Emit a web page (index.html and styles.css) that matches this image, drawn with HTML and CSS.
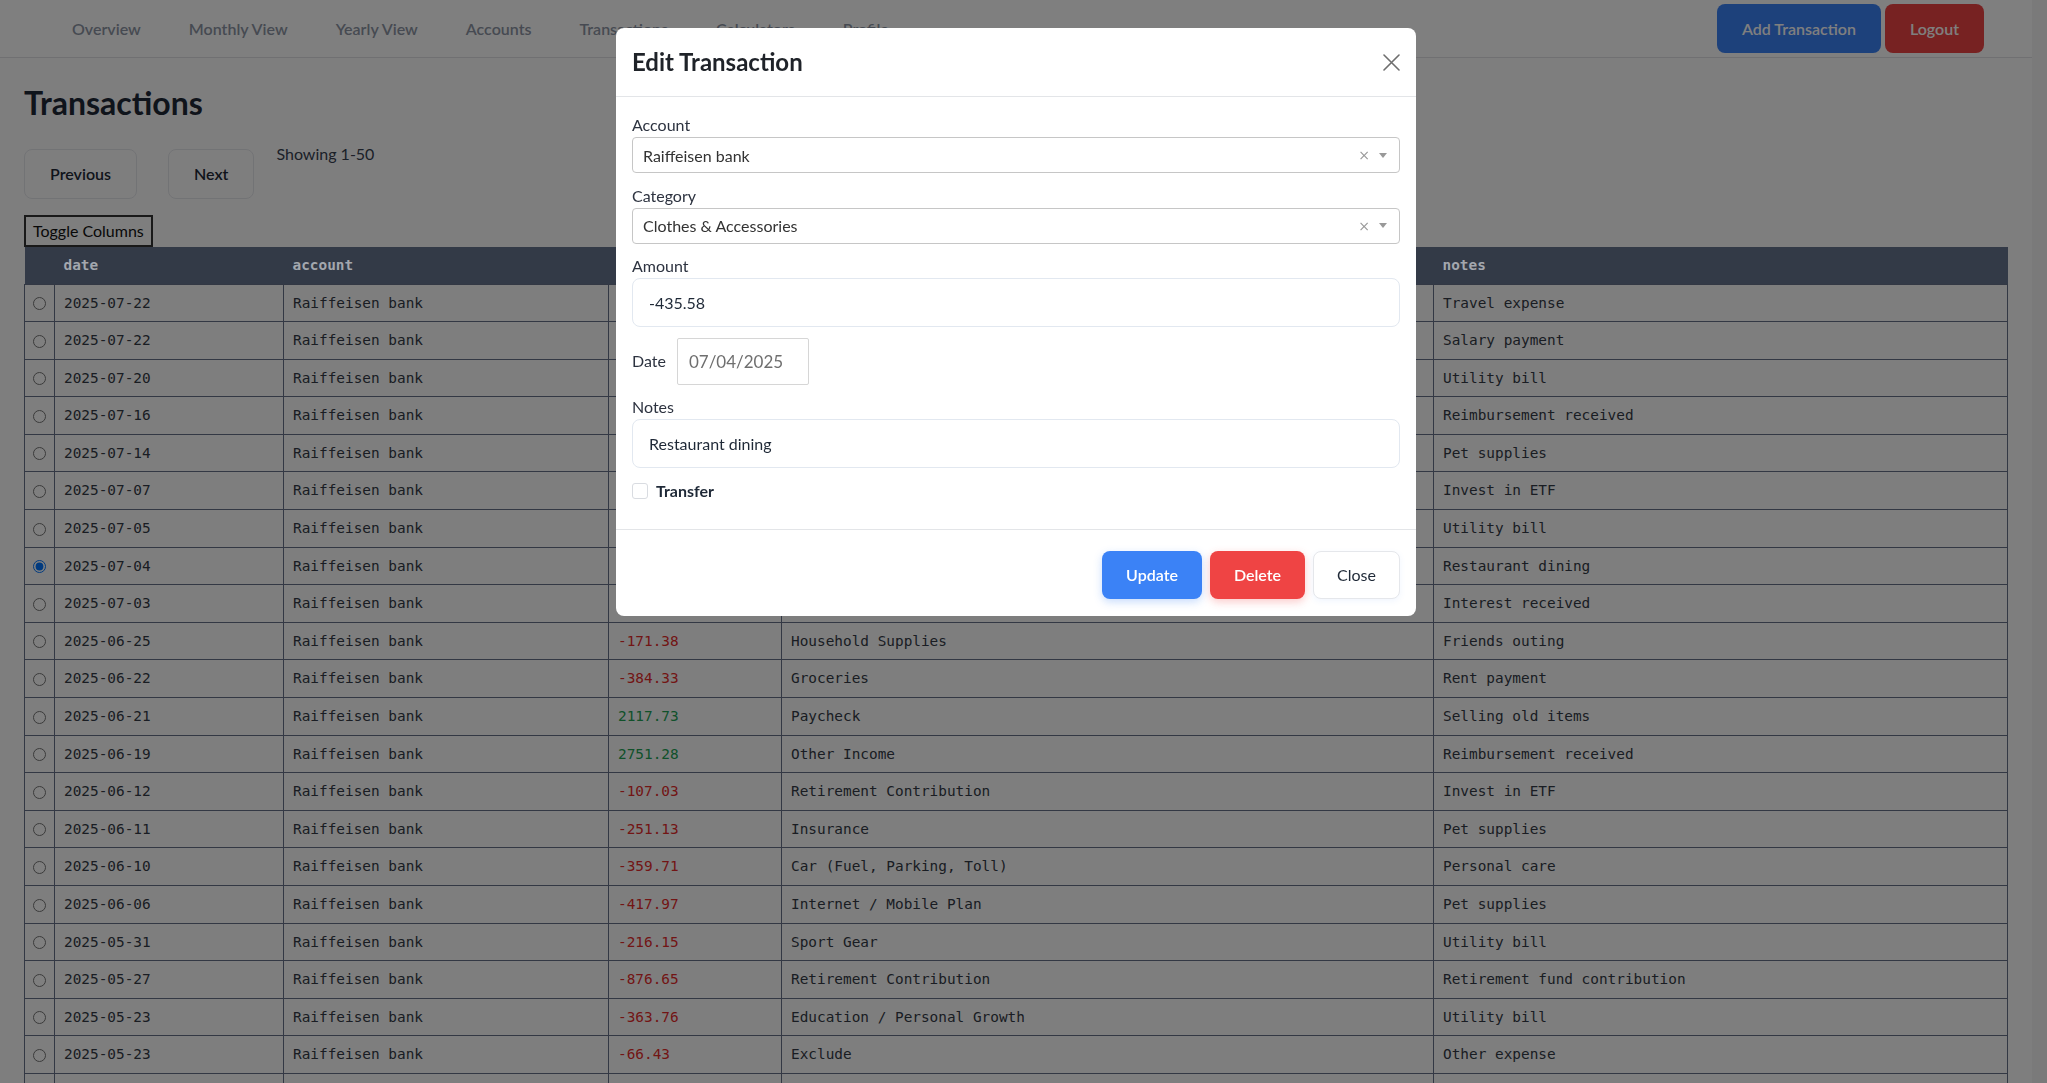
FILE: index.html
```html
<!DOCTYPE html>
<html lang="en">
<head>
<meta charset="utf-8">
<title>Transactions</title>
<link rel="stylesheet" href="styles.css">
</head>
<body class="modal-open">
<div class="app">
  <nav class="topnav">
    <ul class="nav-links">
      <li><a href="#">Overview</a></li>
      <li><a href="#">Monthly View</a></li>
      <li><a href="#">Yearly View</a></li>
      <li><a href="#">Accounts</a></li>
      <li><a href="#">Transactions</a></li>
      <li><a href="#">Calculators</a></li>
      <li><a href="#">Profile</a></li>
    </ul>
    <div class="nav-actions">
      <button class="btn btn-primary nav-btn">Add Transaction</button>
      <button class="btn btn-danger nav-btn">Logout</button>
    </div>
  </nav>

  <main class="page">
    <h1 class="page-title">Transactions</h1>
    <div class="pager">
      <button class="pager-btn pager-prev">Previous</button>
      <button class="pager-btn">Next</button>
      <span class="pager-info">Showing 1-50</span>
    </div>
    <button class="toggle-cols">Toggle Columns</button>

    <table class="txn-table">
      <colgroup>
        <col class="c-sel"><col class="c-date"><col class="c-acc"><col class="c-amt"><col class="c-cat"><col class="c-notes">
      </colgroup>
      <thead>
        <tr><th></th><th>date</th><th>account</th><th>amount</th><th>category</th><th>notes</th></tr>
      </thead>
      <tbody>
        <tr><td class="sel"><input type="radio" name="row"></td><td>2025-07-22</td><td>Raiffeisen bank</td><td class="neg">-89.50</td><td>Travel</td><td>Travel expense</td></tr>
        <tr><td class="sel"><input type="radio" name="row"></td><td>2025-07-22</td><td>Raiffeisen bank</td><td class="pos">3200.00</td><td>Paycheck</td><td>Salary payment</td></tr>
        <tr><td class="sel"><input type="radio" name="row"></td><td>2025-07-20</td><td>Raiffeisen bank</td><td class="neg">-120.45</td><td>Utilities</td><td>Utility bill</td></tr>
        <tr><td class="sel"><input type="radio" name="row"></td><td>2025-07-16</td><td>Raiffeisen bank</td><td class="pos">245.10</td><td>Other Income</td><td>Reimbursement received</td></tr>
        <tr><td class="sel"><input type="radio" name="row"></td><td>2025-07-14</td><td>Raiffeisen bank</td><td class="neg">-64.20</td><td>Pets</td><td>Pet supplies</td></tr>
        <tr><td class="sel"><input type="radio" name="row"></td><td>2025-07-07</td><td>Raiffeisen bank</td><td class="neg">-500.00</td><td>Investments</td><td>Invest in ETF</td></tr>
        <tr><td class="sel"><input type="radio" name="row"></td><td>2025-07-05</td><td>Raiffeisen bank</td><td class="neg">-98.30</td><td>Utilities</td><td>Utility bill</td></tr>
        <tr><td class="sel"><input type="radio" name="row" checked></td><td>2025-07-04</td><td>Raiffeisen bank</td><td class="neg">-435.58</td><td>Clothes &amp; Accessories</td><td>Restaurant dining</td></tr>
        <tr><td class="sel"><input type="radio" name="row"></td><td>2025-07-03</td><td>Raiffeisen bank</td><td class="pos">12.47</td><td>Interest</td><td>Interest received</td></tr>
        <tr><td class="sel"><input type="radio" name="row"></td><td>2025-06-25</td><td>Raiffeisen bank</td><td class="neg">-171.38</td><td>Household Supplies</td><td>Friends outing</td></tr>
        <tr><td class="sel"><input type="radio" name="row"></td><td>2025-06-22</td><td>Raiffeisen bank</td><td class="neg">-384.33</td><td>Groceries</td><td>Rent payment</td></tr>
        <tr><td class="sel"><input type="radio" name="row"></td><td>2025-06-21</td><td>Raiffeisen bank</td><td class="pos">2117.73</td><td>Paycheck</td><td>Selling old items</td></tr>
        <tr><td class="sel"><input type="radio" name="row"></td><td>2025-06-19</td><td>Raiffeisen bank</td><td class="pos">2751.28</td><td>Other Income</td><td>Reimbursement received</td></tr>
        <tr><td class="sel"><input type="radio" name="row"></td><td>2025-06-12</td><td>Raiffeisen bank</td><td class="neg">-107.03</td><td>Retirement Contribution</td><td>Invest in ETF</td></tr>
        <tr><td class="sel"><input type="radio" name="row"></td><td>2025-06-11</td><td>Raiffeisen bank</td><td class="neg">-251.13</td><td>Insurance</td><td>Pet supplies</td></tr>
        <tr><td class="sel"><input type="radio" name="row"></td><td>2025-06-10</td><td>Raiffeisen bank</td><td class="neg">-359.71</td><td>Car (Fuel, Parking, Toll)</td><td>Personal care</td></tr>
        <tr><td class="sel"><input type="radio" name="row"></td><td>2025-06-06</td><td>Raiffeisen bank</td><td class="neg">-417.97</td><td>Internet / Mobile Plan</td><td>Pet supplies</td></tr>
        <tr><td class="sel"><input type="radio" name="row"></td><td>2025-05-31</td><td>Raiffeisen bank</td><td class="neg">-216.15</td><td>Sport Gear</td><td>Utility bill</td></tr>
        <tr><td class="sel"><input type="radio" name="row"></td><td>2025-05-27</td><td>Raiffeisen bank</td><td class="neg">-876.65</td><td>Retirement Contribution</td><td>Retirement fund contribution</td></tr>
        <tr><td class="sel"><input type="radio" name="row"></td><td>2025-05-23</td><td>Raiffeisen bank</td><td class="neg">-363.76</td><td>Education / Personal Growth</td><td>Utility bill</td></tr>
        <tr><td class="sel"><input type="radio" name="row"></td><td>2025-05-23</td><td>Raiffeisen bank</td><td class="neg">-66.43</td><td>Exclude</td><td>Other expense</td></tr>
        <tr><td class="sel"><input type="radio" name="row"></td><td>2025-05-20</td><td>Raiffeisen bank</td><td class="neg">-45.90</td><td>Groceries</td><td>Weekly shopping</td></tr>
        <tr><td class="sel"><input type="radio" name="row"></td><td>2025-05-18</td><td>Raiffeisen bank</td><td class="neg">-29.99</td><td>Subscriptions</td><td>Streaming</td></tr>
      </tbody>
    </table>
  </main>
</div>

<div class="backdrop"></div>

<div class="modal">
  <div class="modal-dialog">
    <div class="modal-header">
      <h5 class="modal-title">Edit Transaction</h5>
      <button class="btn-close" aria-label="Close">
        <svg width="17" height="17" viewBox="0 0 17 17"><path d="M1 1 L16 16 M16 1 L1 16" stroke="#6e6e6e" stroke-width="1.6" fill="none" stroke-linecap="round"/></svg>
      </button>
    </div>
    <div class="modal-body">
      <div class="group">
        <label class="lbl">Account</label>
        <div class="select">
          <span class="select-value">Raiffeisen bank</span>
          <span class="select-clear">×</span>
          <svg class="select-caret" width="8" height="5" viewBox="0 0 8 5"><path d="M0 0 H8 L4 5 Z" fill="#999"/></svg>
        </div>
      </div>
      <div class="group">
        <label class="lbl">Category</label>
        <div class="select">
          <span class="select-value">Clothes &amp; Accessories</span>
          <span class="select-clear">×</span>
          <svg class="select-caret" width="8" height="5" viewBox="0 0 8 5"><path d="M0 0 H8 L4 5 Z" fill="#999"/></svg>
        </div>
      </div>
      <div class="group">
        <label class="lbl">Amount</label>
        <input class="field" type="text" value="-435.58">
      </div>
      <div class="group date-row">
        <label class="lbl-inline">Date</label>
        <input class="date-field" type="text" value="07/04/2025">
      </div>
      <div class="group">
        <label class="lbl">Notes</label>
        <input class="field" type="text" value="Restaurant dining">
      </div>
      <div class="group check-row">
        <input class="check" type="checkbox">
        <span class="check-label">Transfer</span>
      </div>
    </div>
    <div class="modal-footer">
      <button class="btn btn-primary btn-shadow-blue">Update</button>
      <button class="btn btn-danger btn-shadow-red">Delete</button>
      <button class="btn btn-light">Close</button>
    </div>
  </div>
</div>
</body>
</html>
```

FILE: styles.css
```css
* { box-sizing: border-box; }

html, body { height: 100%; }

body {
  margin: 0;
  padding-right: 15px;
  background: #f4f4f4;
  font-family: "Lato", "Noto Sans", sans-serif;
  font-size: 16px;
  color: #1f2937;
  overflow: hidden;
}

.app {
  background: #fdfdfd;
  min-height: 100%;
}

/* ---------- top navigation ---------- */
.topnav {
  display: flex;
  align-items: center;
  height: 58px;
  padding: 0 48px;
  background: #ffffff;
  border-bottom: 1px solid #e0e1e4;
}

.nav-links {
  display: flex;
  list-style: none;
  margin: 0;
  padding: 0;
}

.nav-links a {
  display: block;
  padding: 0 24px;
  font-size: 16px;
  font-weight: 600;
  line-height: 24px;
  color: #8d95a4;
  text-decoration: none;
}

.nav-actions {
  margin-left: auto;
  display: flex;
  gap: 4px;
}

.btn {
  font-family: "Lato", "Noto Sans", sans-serif;
  font-size: 16px;
  font-weight: 600;
  line-height: 24px;
  padding: 12px 24px;
  border: none;
  border-radius: 8px;
  cursor: pointer;
}

.nav-btn {
  line-height: 25px;
  padding: 12px 25px;
}

.btn-primary { background: #3b82f6; color: #ffffff; }
.btn-danger { background: #ef4444; color: #ffffff; }
.btn-light {
  background: #ffffff;
  color: #1f2937;
  font-weight: 400;
  border: 1px solid #e5e7eb;
  padding: 11px 23px;
  box-shadow: 0 2px 6px rgba(59, 130, 246, 0.08);
}
.btn-shadow-blue { box-shadow: 0 3px 8px rgba(59, 130, 246, 0.28); }
.btn-shadow-red { box-shadow: 0 3px 8px rgba(239, 68, 68, 0.28); }

/* ---------- page ---------- */
.page {
  padding: 0 24px;
}

.page-title {
  margin: 25px 0 0;
  font-size: 32px;
  font-weight: 700;
  line-height: normal;
  color: #1f2937;
}

.pager {
  display: flex;
  align-items: flex-start;
  margin-top: 20px;
}

.pager-btn {
  margin-top: 7px;
  margin-right: 22px;
  padding: 12px 25px;
  background: transparent;
  border: 1px solid #e5e7eb;
  border-radius: 8px;
  font-family: "Lato", "Noto Sans", sans-serif;
  font-size: 16px;
  font-weight: 600;
  line-height: 24px;
  color: #1f2937;
}

.pager-prev { margin-right: 31px; }

.pager-info {
  line-height: 24px;
  color: #374151;
}

.toggle-cols {
  display: block;
  margin-top: 16px;
  padding: 3px 7px;
  background: transparent;
  border: 2px solid #333333;
  font-family: "Lato", "Noto Sans", sans-serif;
  font-size: 16px;
  line-height: 22px;
  color: #111111;
}

/* ---------- table ---------- */
.txn-table {
  width: 100%;
  border-collapse: collapse;
  table-layout: fixed;
  font-family: "DejaVu Sans Mono", "Liberation Mono", monospace;
  font-size: 14.4px;
}

.c-sel { width: 30px; }
.c-date { width: 229px; }
.c-acc { width: 325px; }
.c-amt { width: 173px; }
.c-cat { width: 652px; }
.c-notes { width: auto; }

.txn-table th {
  position: relative;
  z-index: 1045;
  height: 37px;
  padding: 0 9px;
  background: #333a47;
  color: #a3a7ae;
  text-align: left;
  font-weight: 700;
}

.txn-table td {
  padding: 8px 9px;
  line-height: 20.6px;
  border: 1px solid #667089;
  color: #343a46;
  white-space: nowrap;
  overflow: hidden;
}

.txn-table td.sel {
  padding: 0;
  text-align: center;
}

.txn-table td.sel input {
  margin: 0;
  vertical-align: middle;
}

.txn-table td.neg { color: #e52b2b; }
.txn-table td.pos { color: #22a355; }

/* ---------- modal ---------- */
.backdrop {
  position: fixed;
  inset: 0;
  z-index: 1040;
  background: rgba(0, 0, 0, 0.5);
}

.modal {
  position: fixed;
  inset: 0;
  z-index: 1050;
  padding-right: 15px;
  overflow: hidden;
}

.modal-dialog {
  width: 800px;
  margin: 28px auto;
  background: #ffffff;
  border-radius: 8px;
}

.modal-header {
  display: flex;
  align-items: center;
  justify-content: space-between;
  padding: 16px;
  border-bottom: 1px solid #e3e5e8;
}

.modal-title {
  margin: 0;
  font-size: 24px;
  font-weight: 700;
  line-height: 36px;
  color: #1f2329;
}

.btn-close {
  display: flex;
  padding: 0;
  border: none;
  background: transparent;
}

.modal-body {
  padding: 16px;
}

.group { margin-bottom: 10.5px; }

.lbl {
  display: block;
  line-height: 24px;
  color: #2d3340;
}

.select {
  display: flex;
  align-items: center;
  height: 36px;
  padding: 0 12px 0 10px;
  border: 1px solid #c6c6c6;
  border-radius: 4px;
}

.select-value {
  flex: 1;
  color: #333333;
}

.select-clear {
  font-family: "DejaVu Sans", sans-serif;
  font-size: 14px;
  color: #9a9a9a;
  margin-right: 9px;
}

.field {
  display: block;
  width: 100%;
  padding: 12px 16px;
  border: 1px solid #e2e8f0;
  border-radius: 8px;
  font-family: "Lato", "Noto Sans", sans-serif;
  font-size: 16px;
  line-height: 23px;
  color: #1f2937;
  outline: none;
}

.date-row {
  display: flex;
  align-items: center;
  gap: 11px;
}

.lbl-inline {
  line-height: 24px;
  color: #2d3340;
}

.date-field {
  width: 132px;
  height: 47px;
  padding: 0 11px;
  border: 1px solid #d6d6d6;
  border-radius: 2px;
  font-family: "Lato", "Noto Sans", sans-serif;
  font-size: 17px;
  color: #6f6f6f;
  outline: none;
}

.check-row {
  display: flex;
  align-items: center;
  gap: 8px;
  height: 24px;
}

.check {
  appearance: none;
  margin: 0;
  width: 16px;
  height: 16px;
  border: 1px solid #d9dce1;
  border-radius: 3px;
  background: #ffffff;
}

.check-label {
  font-weight: 700;
  color: #1f2937;
}

.modal-footer {
  display: flex;
  justify-content: flex-end;
  gap: 8px;
  padding: 21px 16px 17px;
  border-top: 1px solid #e3e5e8;
}
```
